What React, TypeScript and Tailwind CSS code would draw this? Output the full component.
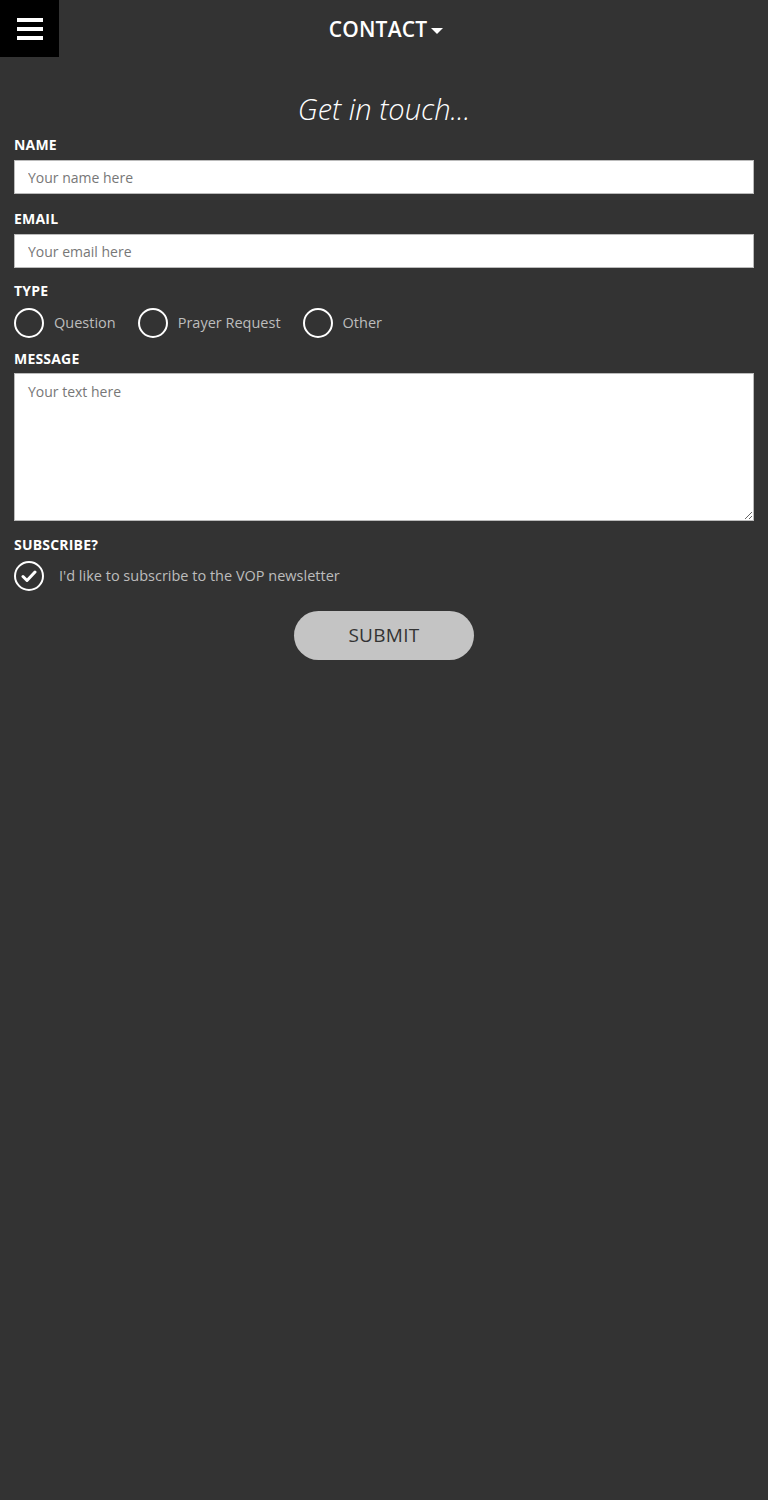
import { useState } from "react";

const font = { fontFamily: '"Open Sans", "Noto Sans", sans-serif' };

function Label({ children, className = "" }: { children: React.ReactNode; className?: string }) {
  return (
    <label className={`block text-[14px] leading-[20px] font-bold text-white tracking-[0.2px] ${className}`}>
      {children}
    </label>
  );
}

function Radio({ label, checked, onClick }: { label: string; checked: boolean; onClick: () => void }) {
  return (
    <button type="button" onClick={onClick} className="flex items-center gap-[10px] mr-[22px]">
      <span className="w-[30px] h-[30px] rounded-full border-2 border-white flex items-center justify-center">
        {checked && <span className="w-[14px] h-[14px] rounded-full bg-white" />}
      </span>
      <span className="text-[14.5px] text-[#bdbdbd]">{label}</span>
    </button>
  );
}

export default function App() {
  const [type, setType] = useState<string | null>(null);
  const [subscribe, setSubscribe] = useState(true);

  return (
    <div style={font} className="min-h-[1500px] bg-[#333333] text-white">
      {/* header */}
      <div className="relative h-[57px] flex items-center justify-center">
        <button className="absolute left-0 top-0 w-[59px] h-[57px] bg-black flex flex-col items-center justify-center gap-[5px]">
          <span className="block w-[26px] h-[4px] bg-white" />
          <span className="block w-[26px] h-[4px] bg-white" />
          <span className="block w-[26px] h-[4px] bg-white" />
        </button>
        <div className="flex items-center gap-[4px] text-[21px] font-semibold tracking-[0.2px] ml-[4px] mt-[2px]">
          CONTACT
          <svg width="12" height="8" viewBox="0 0 12 8" className="mt-[2px]">
            <path d="M0 1 L12 1 L6 7 Z" fill="white" />
          </svg>
        </div>
      </div>

      <form className="px-[14px]" onSubmit={(e) => e.preventDefault()}>
        <h1 className="mt-[34px] text-center text-[29px] leading-[36px] italic font-light text-white">
          Get in touch...
        </h1>

        <Label className="mt-[8px]">NAME</Label>
        <input
          placeholder="Your name here"
          className="mt-[5px] block w-full h-[34px] bg-white border border-[#bbb] px-[13px] text-[14px] text-[#333] placeholder:text-[#777] outline-none"
        />

        <Label className="mt-[15px]">EMAIL</Label>
        <input
          placeholder="Your email here"
          className="mt-[5px] block w-full h-[34px] bg-white border border-[#bbb] px-[13px] text-[14px] text-[#333] placeholder:text-[#777] outline-none"
        />

        <Label className="mt-[13px]">TYPE</Label>
        <div className="mt-[7px] flex items-center">
          {["Question", "Prayer Request", "Other"].map((t) => (
            <Radio key={t} label={t} checked={type === t} onClick={() => setType(t)} />
          ))}
        </div>

        <Label className="mt-[11px]">MESSAGE</Label>
        <textarea
          placeholder="Your text here"
          className="mt-[4px] block w-full h-[148px] bg-white border border-[#bbb] px-[13px] py-[7px] text-[14px] text-[#333] placeholder:text-[#777] outline-none"
        />

        <Label className="mt-[14px]">SUBSCRIBE?</Label>
        <button
          type="button"
          onClick={() => setSubscribe(!subscribe)}
          className="mt-[6px] flex items-center gap-[15px]"
        >
          <span className="w-[30px] h-[30px] rounded-full border-2 border-white flex items-center justify-center">
            {subscribe && (
              <svg width="16" height="14" viewBox="0 0 16 14">
                <path d="M2 7.5 L6 11.5 L14 3" stroke="white" strokeWidth="3" fill="none" strokeLinecap="round" strokeLinejoin="round" />
              </svg>
            )}
          </span>
          <span className="text-[14.5px] text-[#bdbdbd]">I'd like to subscribe to the VOP newsletter</span>
        </button>

        <div className="mt-[20px] flex justify-center">
          <button
            type="submit"
            className="w-[180px] h-[49px] rounded-full bg-[#c4c4c4] text-[#333] text-[19px] font-medium tracking-[0.3px]"
          >
            SUBMIT
          </button>
        </div>
      </form>
    </div>
  );
}
